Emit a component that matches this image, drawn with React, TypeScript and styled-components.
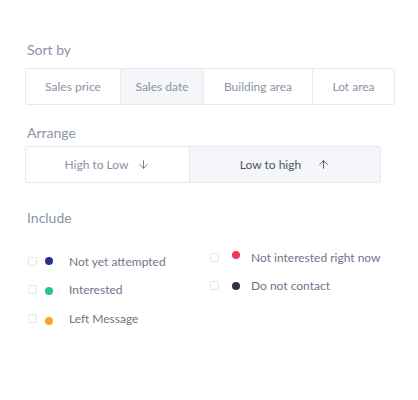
import React, { useState } from 'react';
import styled, { createGlobalStyle } from 'styled-components';
import { ArrowDown, ArrowUp } from 'lucide-react';

const GlobalStyle = createGlobalStyle`
  body {
    margin: 0;
    background: #ffffff;
    font-family: 'Lato', 'Liberation Sans', sans-serif;
  }
`;

const Page = styled.div`
  width: 418px;
  height: 400px;
  padding: 41px 0 0 25px;
  box-sizing: border-box;
`;

const SectionTitle = styled.div<{ $top?: number; $bottom: number }>`
  font-size: 14px;
  line-height: 18px;
  color: #8c95a6;
  padding-left: 2px;
  margin-top: ${(p) => p.$top || 0}px;
  margin-bottom: ${(p) => p.$bottom}px;
`;

const SegmentBar = styled.div`
  display: flex;
  height: 37px;
  box-sizing: border-box;
  border: 1px solid #e6e9ee;
  border-radius: 2px;
  width: fit-content;
`;

const Segment = styled.button<{ $w: number; $active?: boolean; $strong?: boolean; $gap?: number }>`
  width: ${(p) => p.$w}px;
  display: flex;
  align-items: center;
  justify-content: center;
  gap: ${(p) => p.$gap || 0}px;
  border: 0;
  border-left: 1px solid #e6e9ee;
  background: ${(p) => (p.$active ? '#f4f6f9' : '#ffffff')};
  color: ${(p) => (p.$strong ? '#4d5366' : '#8a93a5')};
  font-family: inherit;
  font-size: 12px;
  padding: 0;
  cursor: pointer;
  &:first-child {
    border-left: 0;
  }
  svg {
    color: ${(p) => (p.$strong ? '#4d5366' : '#6f778a')};
  }
`;

const IncludeGrid = styled.div`
  display: flex;
  margin-top: 16px;
  padding-left: 3px;
`;

const Column = styled.div<{ $w: number; $top: number }>`
  width: ${(p) => p.$w}px;
  display: flex;
  flex-direction: column;
  padding-top: ${(p) => p.$top}px;
`;

const Row = styled.label<{ $boxGap: number; $dotGap: number }>`
  display: flex;
  align-items: center;
  height: 28.5px;
  font-size: 12px;
  color: #6f7588;
  cursor: pointer;
  & > span:first-child {
    margin-right: ${(p) => p.$boxGap}px;
  }
  & > i {
    margin-right: ${(p) => p.$dotGap}px;
  }
`;

const Box = styled.span`
  width: 9px;
  height: 9px;
  box-sizing: border-box;
  border: 1px solid #e3e6eb;
  border-radius: 2px;
  background: #fff;
`;

const Dot = styled.i<{ $c: string; $dy?: number }>`
  width: 8px;
  height: 8px;
  border-radius: 50%;
  background: ${(p) => p.$c};
  transform: translateY(${(p) => p.$dy || 0}px);
`;

const sortOptions = [
  { label: 'Sales price', w: 94 },
  { label: 'Sales date', w: 83 },
  { label: 'Building area', w: 109 },
  { label: 'Lot area', w: 82 },
];

const left = [
  { label: 'Not yet attempted', c: '#2b2f8f', dy: 0 },
  { label: 'Interested', c: '#27c3a0', dy: 1 },
  { label: 'Left Message', c: '#f5a623', dy: 3 },
];

const right = [
  { label: 'Not interested right now', c: '#f2355b', dy: -2 },
  { label: 'Do not contact', c: '#2f3142', dy: 0 },
];

export default function App() {
  const [sort, setSort] = useState(1);
  const [order, setOrder] = useState<'desc' | 'asc'>('asc');

  return (
    <Page>
      <GlobalStyle />
      <SectionTitle $bottom={9}>Sort by</SectionTitle>
      <SegmentBar>
        {sortOptions.map((o, i) => (
          <Segment key={o.label} $w={o.w} $active={sort === i} onClick={() => setSort(i)}>
            {o.label}
          </Segment>
        ))}
      </SegmentBar>

      <SectionTitle $top={19} $bottom={4}>Arrange</SectionTitle>
      <SegmentBar>
        <Segment $w={163} $gap={9} $active={order === 'desc'} onClick={() => setOrder('desc')}>
          High to Low <ArrowDown size={13} strokeWidth={1.75} />
        </Segment>
        <Segment $w={191} $gap={16} $strong $active={order === 'asc'} onClick={() => setOrder('asc')}>
          Low to high <ArrowUp size={13} strokeWidth={1.75} />
        </Segment>
      </SegmentBar>

      <SectionTitle $top={26} $bottom={0}>Include</SectionTitle>
      <IncludeGrid>
        <Column $w={182} $top={4}>
          {left.map((r) => (
            <Row key={r.label} $boxGap={8} $dotGap={16}>
              <Box />
              <Dot $c={r.c} $dy={r.dy} />
              {r.label}
            </Row>
          ))}
        </Column>
        <Column $w={190} $top={0}>
          {right.map((r) => (
            <Row key={r.label} $boxGap={13} $dotGap={11}>
              <Box />
              <Dot $c={r.c} $dy={r.dy} />
              {r.label}
            </Row>
          ))}
        </Column>
      </IncludeGrid>
    </Page>
  );
}
